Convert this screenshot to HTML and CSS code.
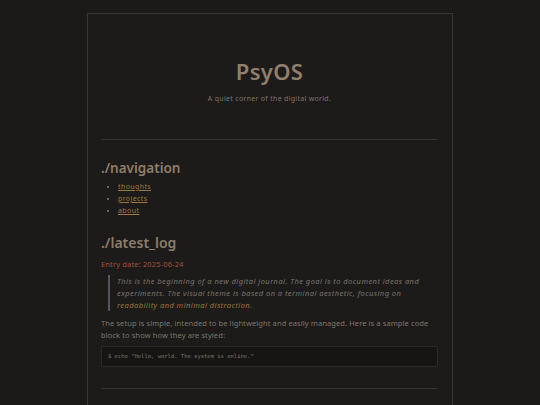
FILE: index.html
```html
<!DOCTYPE html>
<html lang="en">
<head>
<meta charset="utf-8">
<title>PsyOS</title>
<link rel="stylesheet" href="styles.css">
</head>
<body>
<div class="page">
  <header class="masthead">
    <h1 class="title">PsyOS</h1>
    <p class="tagline">A quiet corner of the digital world.</p>
  </header>
  <hr class="rule">
  <section class="nav-section">
    <h2 class="heading">./navigation</h2>
    <ul class="nav-list">
      <li><a href="#" class="link">thoughts</a></li>
      <li><a href="#" class="link">projects</a></li>
      <li><a href="#" class="link">about</a></li>
    </ul>
  </section>
  <section class="log-section">
    <h2 class="heading heading-log">./latest_log</h2>
    <p class="entry-date">Entry date: 2025-06-24</p>
    <blockquote class="quote">This is the beginning of a new digital journal. The goal is to document ideas and experiments. The visual theme is based on a terminal aesthetic, focusing on <span class="quote-accent">readability and minimal distraction</span>.</blockquote>
    <p class="body-text">The setup is simple, intended to be lightweight and easily managed. Here is a sample code block to show how they are styled:</p>
    <pre class="code-block"><code>$ echo "Hello, world. The system is online."</code></pre>
  </section>
  <hr class="rule rule-bottom">
</div>
</body>
</html>
```

FILE: styles.css
```css
html, body {
  margin: 0;
  padding: 0;
  background: #1b1a18;
}
body {
  padding-top: 13px;
  font-family: "Noto Sans", "Open Sans", "DejaVu Sans", sans-serif;
  color: #7d766c;
}
.page {
  width: 337px;
  margin: 0 auto;
  padding: 0 14px 40px 13px;
  border: 1px solid #38342f;
  background: #1d1b19;
  min-height: 420px;
}
.masthead {
  text-align: center;
  padding-top: 43px;
}
.title {
  margin: 0;
  font-size: 22px;
  line-height: 28px;
  font-weight: 600;
  color: #8f7f6c;
  letter-spacing: 0.3px;
}
.tagline {
  margin: 8px 0 0;
  font-size: 7px;
  line-height: 12px;
  letter-spacing: 0.3px;
  color: #7c746a;
}
.rule {
  margin: 34px 0 0;
  border: 0;
  border-top: 1px solid #36322e;
  height: 0;
}
.rule-bottom {
  margin-top: 21px;
}
.heading {
  margin: 19px 0 0;
  font-size: 13.5px;
  line-height: 18px;
  font-weight: 600;
  color: #8d7d6b;
}
.heading-log {
  margin-top: 17px;
  font-size: 14px;
}
.nav-list {
  margin: 4px 0 0;
  padding-left: 17px;
  font-size: 7px;
  line-height: 12px;
  color: #8a8176;
}
.link {
  color: #9f793f;
  text-decoration: underline;
  letter-spacing: 0.4px;
}
.entry-date {
  margin: 6px 0 0;
  font-size: 7.5px;
  line-height: 12px;
  color: #a64f3c;
  letter-spacing: 0.15px;
}
.quote {
  margin: 5px 0 0 7px;
  padding-left: 7px;
  border-left: 2px solid #57525c;
  font-size: 7.5px;
  line-height: 12px;
  font-style: italic;
  color: #7a746c;
  letter-spacing: 0.45px;
}
.quote-accent {
  color: #9b7536;
}
.body-text {
  margin: 6px 0 0;
  font-size: 7.5px;
  line-height: 12px;
  color: #7d766c;
  letter-spacing: 0.1px;
}
.code-block {
  margin: 5px 0 0;
  padding: 0 6px;
  height: 19px;
  line-height: 19px;
  background: #171513;
  border: 1px solid #2c2926;
  border-radius: 1px;
  font-family: "Liberation Mono", "DejaVu Sans Mono", monospace;
  font-size: 5.5px;
  color: #7f786e;
}
```
